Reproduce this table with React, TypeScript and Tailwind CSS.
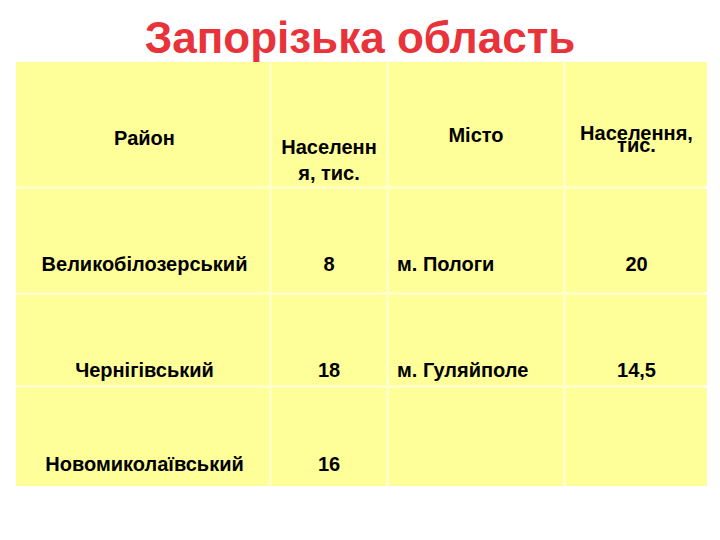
import React from 'react';

interface Row {
  district: string;
  districtPop: string;
  city: string;
  cityPop: string;
  pb: string;
}

const rows: Row[] = [
  { district: 'Великобілозерський', districtPop: '8', city: 'м. Пологи', cityPop: '20', pb: 'pb-[17px]' },
  { district: 'Чернігівський', districtPop: '18', city: 'м. Гуляйполе', cityPop: '14,5', pb: 'pb-[4px]' },
  { district: 'Новомиколаївський', districtPop: '16', city: '', cityPop: '', pb: 'pb-[11px]' },
];

export default function App() {
  return (
    <div
      className="w-[720px] h-[540px] bg-white overflow-hidden pt-[16px]"
      style={{ fontFamily: '"Liberation Sans", Arial, sans-serif' }}
    >
      <h1 className="h-[44px] text-center text-[44px] leading-[44px] font-bold text-[#e8333b]">
        Запорізька область
      </h1>

      <div className="mt-[2px] ml-[16px] w-[688px] grid grid-cols-[253px_114px_174px_141px] grid-rows-[124px_103px_90px_98px] gap-[3px] bg-[#ffffc6] text-[20px] font-bold text-black">
        {/* header */}
        <div className="bg-[#ffff99] pt-[65px] pl-[4px] text-center leading-[22px]">Район</div>
        <div className="bg-[#ffff99] pt-[72px] text-center leading-[26px] px-[6px]">
          Населенн
          <br />я, тис.
        </div>
        <div className="bg-[#ffff99] pt-[62px] text-center leading-[22px]">Місто</div>
        <div className="bg-[#ffff99] pt-[65px] text-center leading-[12px]">
          Населення,
          <br />
          тис.
        </div>

        {rows.map((r) => (
          <React.Fragment key={r.district}>
            <div className={`bg-[#ffff99] flex items-end justify-center pl-[4px] leading-[22px] ${r.pb}`}>{r.district}</div>
            <div className={`bg-[#ffff99] flex items-end justify-center leading-[22px] ${r.pb}`}>{r.districtPop}</div>
            <div className={`bg-[#ffff99] flex items-end pl-[8px] leading-[22px] ${r.pb}`}>{r.city}</div>
            <div className={`bg-[#ffff99] flex items-end justify-center leading-[22px] ${r.pb}`}>{r.cityPop}</div>
          </React.Fragment>
        ))}
      </div>
    </div>
  );
}
